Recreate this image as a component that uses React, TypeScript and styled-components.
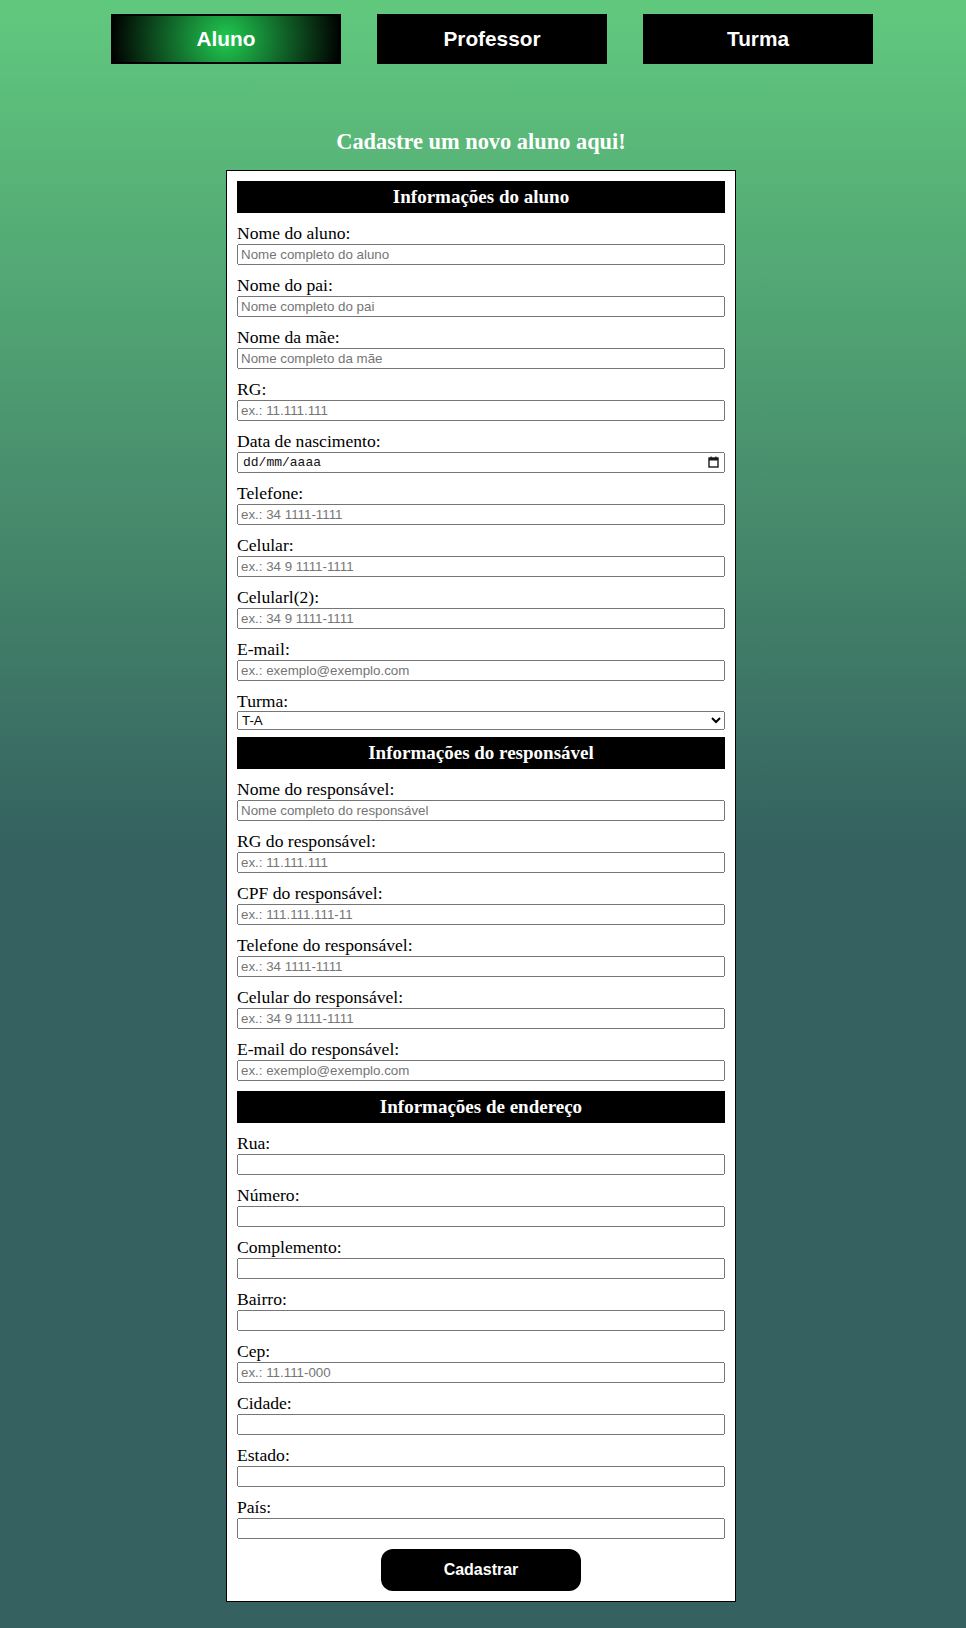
import React from 'react';
import styled, { createGlobalStyle } from 'styled-components';

const GlobalStyle = createGlobalStyle`
  html, body {
    margin: 0;
    padding: 0;
  }
  body {
    font-family: "Liberation Serif", "Times New Roman", serif;
  }
`;

const Page = styled.div`
  min-height: 100vh;
  background: linear-gradient(to bottom, #61c97e 0%, #356260 52%, #356260 100%);
  padding-bottom: 20px;
  box-sizing: border-box;
`;

const Nav = styled.nav`
  display: flex;
  gap: 36px;
  padding: 14px 0 0 111px;
`;

const NavButton = styled.button<{ $active?: boolean }>`
  width: 230px;
  height: 50px;
  border: 2px solid #000;
  background: ${(p) => (p.$active ? 'radial-gradient(circle, #21c951 0%, #000 100%)' : '#000')};
  color: #fff;
  font-family: "Liberation Sans", Arial, sans-serif;
  font-weight: bold;
  font-size: 20.8px;
  cursor: pointer;
`;

const Main = styled.main`
  display: flex;
  flex-direction: column;
  align-items: center;
  padding-right: 4px;
`;

const Title = styled.h2`
  margin: 65px 0 15px;
  color: #fff;
  font-size: 22.4px;
  font-weight: bold;
`;

const Form = styled.form`
  width: 510px;
  box-sizing: border-box;
  background: #fff;
  border: 1px solid #000;
  padding: 10px;
  display: flex;
  flex-direction: column;
`;

const SectionHeader = styled.h3<{ $gap?: number }>`
  margin: ${(p) => p.$gap ?? 0}px 0 0;
  height: 32px;
  line-height: 32px;
  background: #000;
  color: #fff;
  text-align: center;
  font-size: 19px;
  font-weight: bold;
`;

const FieldList = styled.div`
  display: flex;
  flex-direction: column;
  gap: 10px;
  padding-top: 10px;
`;

const Field = styled.div`
  display: flex;
  flex-direction: column;
`;

const Label = styled.label`
  font-size: 17.6px;
  line-height: 20px;
  height: 20px;
  color: #000;
`;

const Input = styled.input`
  width: 100%;
  box-sizing: border-box;
  height: 21px;
  margin: 1px 0 0;
  font-family: "Liberation Sans", Arial, sans-serif;
  font-size: 13.33px;
`;

const DateBox = styled.div`
  position: relative;
  margin-top: 1px;
`;

const DateInput = styled(Input)`
  margin: 0;
  font-family: "Liberation Mono", "Courier New", monospace;
  font-size: 13px;
  padding-left: 4px;
  &::placeholder {
    color: #111;
  }
`;

const CalendarIcon = styled.svg`
  position: absolute;
  right: 6px;
  top: 4px;
  pointer-events: none;
`;

const Select = styled.select`
  width: 100%;
  height: 19px;
  box-sizing: border-box;
  font-family: "Liberation Sans", Arial, sans-serif;
  font-size: 13.33px;
  color: #000;
`;

const SubmitButton = styled.button`
  align-self: center;
  width: 200px;
  height: 42px;
  margin-top: 10px;
  border: none;
  border-radius: 12px;
  background: #000;
  color: #fff;
  font-family: "Liberation Sans", Arial, sans-serif;
  font-weight: bold;
  font-size: 16px;
  cursor: pointer;
`;

type FieldDef = { label: string; placeholder?: string; type?: string };

const alunoFields: FieldDef[] = [
  { label: 'Nome do aluno:', placeholder: 'Nome completo do aluno' },
  { label: 'Nome do pai:', placeholder: 'Nome completo do pai' },
  { label: 'Nome da mãe:', placeholder: 'Nome completo da mãe' },
  { label: 'RG:', placeholder: 'ex.: 11.111.111' },
  { label: 'Data de nascimento:', type: 'date' },
  { label: 'Telefone:', placeholder: 'ex.: 34 1111-1111' },
  { label: 'Celular:', placeholder: 'ex.: 34 9 1111-1111' },
  { label: 'Celularl(2):', placeholder: 'ex.: 34 9 1111-1111' },
  { label: 'E-mail:', placeholder: 'ex.: exemplo@exemplo.com' },
];

const responsavelFields: FieldDef[] = [
  { label: 'Nome do responsável:', placeholder: 'Nome completo do responsável' },
  { label: 'RG do responsável:', placeholder: 'ex.: 11.111.111' },
  { label: 'CPF do responsável:', placeholder: 'ex.: 111.111.111-11' },
  { label: 'Telefone do responsável:', placeholder: 'ex.: 34 1111-1111' },
  { label: 'Celular do responsável:', placeholder: 'ex.: 34 9 1111-1111' },
  { label: 'E-mail do responsável:', placeholder: 'ex.: exemplo@exemplo.com' },
];

const enderecoFields: FieldDef[] = [
  { label: 'Rua:' },
  { label: 'Número:' },
  { label: 'Complemento:' },
  { label: 'Bairro:' },
  { label: 'Cep:', placeholder: 'ex.: 11.111-000' },
  { label: 'Cidade:' },
  { label: 'Estado:' },
  { label: 'País:' },
];

function FormField({ field }: { field: FieldDef }) {
  if (field.type === 'date') {
    return (
      <Field>
        <Label>{field.label}</Label>
        <DateBox>
          <DateInput type="text" placeholder="dd/mm/aaaa" />
          <CalendarIcon width="11" height="12" viewBox="0 0 11 12">
            <rect x="1" y="2" width="9" height="9" fill="none" stroke="#1a1a1a" strokeWidth="1.4" />
            <rect x="1" y="2" width="9" height="2.5" fill="#1a1a1a" />
            <rect x="2.5" y="0.5" width="1.2" height="2" fill="#1a1a1a" />
            <rect x="7.3" y="0.5" width="1.2" height="2" fill="#1a1a1a" />
          </CalendarIcon>
        </DateBox>
      </Field>
    );
  }
  return (
    <Field>
      <Label>{field.label}</Label>
      <Input type="text" placeholder={field.placeholder} />
    </Field>
  );
}

export default function App() {
  return (
    <>
      <GlobalStyle />
      <Page>
        <Nav>
          <NavButton $active>Aluno</NavButton>
          <NavButton>Professor</NavButton>
          <NavButton>Turma</NavButton>
        </Nav>
        <Main>
          <Title>Cadastre um novo aluno aqui!</Title>
          <Form onSubmit={(e) => e.preventDefault()}>
            <SectionHeader>Informações do aluno</SectionHeader>
            <FieldList>
              {alunoFields.map((f) => (
                <FormField key={f.label} field={f} />
              ))}
              <Field>
                <Label>Turma:</Label>
                <Select defaultValue="T-A">
                  <option>T-A</option>
                  <option>T-B</option>
                  <option>T-C</option>
                </Select>
              </Field>
            </FieldList>

            <SectionHeader $gap={7}>Informações do responsável</SectionHeader>
            <FieldList>
              {responsavelFields.map((f) => (
                <FormField key={f.label} field={f} />
              ))}
            </FieldList>

            <SectionHeader $gap={10}>Informações de endereço</SectionHeader>
            <FieldList>
              {enderecoFields.map((f) => (
                <FormField key={f.label} field={f} />
              ))}
            </FieldList>

            <SubmitButton type="submit">Cadastrar</SubmitButton>
          </Form>
        </Main>
      </Page>
    </>
  );
}
